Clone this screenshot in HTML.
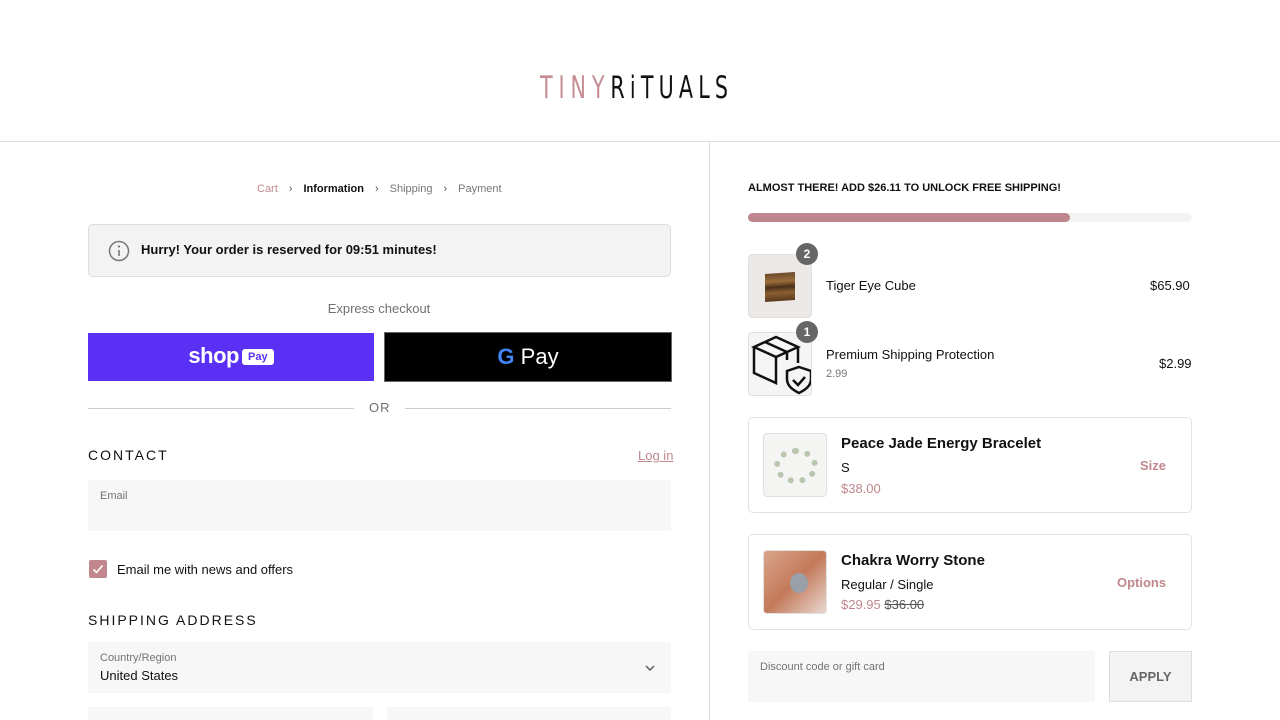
<!DOCTYPE html>
<html><head><meta charset="utf-8"><style>
*{box-sizing:border-box;margin:0;padding:0}
html,body{width:1280px;height:720px;overflow:hidden}
body{background:#fff;font-family:"Liberation Sans",sans-serif;color:#111;position:relative}
.a{position:absolute}
.field{background:#f7f7f7;position:absolute}
.lbl{position:absolute;font-size:11px;color:#737373}
.card{position:absolute;border:1px solid #e3e3e3;border-radius:5px;left:748px;width:444px}
.thumb{position:absolute;border:1px solid #e0e0e0;border-radius:4px;overflow:hidden}
.pink{color:#c0878e}
.badge{position:absolute;width:22px;height:22px;border-radius:11px;background:#666;color:#fff;font-size:12px;font-weight:bold;text-align:center;line-height:22px}
</style></head><body>
<div class="a" style="left:540px;top:70px;font-size:31px;letter-spacing:8px;transform:scaleX(0.74);transform-origin:left;white-space:nowrap;font-family:'DejaVu Sans Condensed','Liberation Sans',sans-serif;font-weight:200"><span style="color:#c58d93">TINY</span><span style="color:#111;letter-spacing:7px">RiTUALS</span></div>
<div class="a" style="left:0;top:141px;width:1280px;height:1px;background:#dedede"></div>
<div class="a" style="left:709px;top:141px;width:1px;height:579px;background:#dedede"></div>

<div class="a" style="left:257px;top:183px;font-size:11px;color:#777;white-space:nowrap"><span class="pink">Cart</span><span style="margin:0 11px;color:#555">›</span><b style="color:#111">Information</b><span style="margin:0 11px;color:#555">›</span>Shipping<span style="margin:0 11px;color:#555">›</span>Payment</div>

<div class="a" style="left:88px;top:224px;width:583px;height:53px;background:#f3f3f3;border:1px solid #ddd;border-radius:5px">
<svg class="a" style="left:19px;top:15px" width="22" height="22" viewBox="0 0 22 22"><circle cx="11" cy="11" r="9.5" fill="none" stroke="#777" stroke-width="1.5"/><line x1="11" y1="10" x2="11" y2="16" stroke="#777" stroke-width="1.6"/><circle cx="11" cy="6.5" r="1.1" fill="#777"/></svg>
<div class="a" style="left:52px;top:17px;font-size:13px;font-weight:bold">Hurry! Your order is reserved for 09:51 minutes!</div></div>

<div class="a" style="left:0;width:758px;top:301px;text-align:center;font-size:13px;color:#707070">Express checkout</div>
<div class="a" style="left:88px;top:333px;width:286px;height:48px;background:#5a31f4;color:#fff;text-align:center">
<span style="font-size:22px;font-weight:bold;line-height:46px;letter-spacing:-0.5px">shop</span><span style="display:inline-block;background:#fff;color:#5a31f4;font-size:11px;font-weight:bold;padding:2px 6px;border-radius:3px;margin-left:3px;vertical-align:3px">Pay</span></div>
<div class="a" style="left:384px;top:332px;width:288px;height:50px;background:#000;border:1px solid #666;color:#fff;text-align:center;font-size:22px;line-height:48px"><span style="font-weight:bold;color:#4285f4">G</span> Pay</div>

<div class="a" style="left:88px;top:408px;width:266px;height:1px;background:#ccc"></div>
<div class="a" style="left:405px;top:408px;width:266px;height:1px;background:#ccc"></div>
<div class="a" style="left:369px;top:400px;font-size:13px;color:#707070;letter-spacing:1px">OR</div>

<div class="a" style="left:88px;top:447px;font-size:14px;letter-spacing:2px">CONTACT</div>
<div class="a pink" style="left:638px;top:448px;font-size:13px;text-decoration:underline">Log in</div>
<div class="field" style="left:88px;top:480px;width:583px;height:51px"><div class="lbl" style="left:12px;top:10px">Email</div></div>
<div class="a" style="left:89px;top:560px;width:18px;height:18px;background:#c0878e;border-radius:2px"><svg width="18" height="18"><path d="M4.5 9.5l3 3 6-7" fill="none" stroke="#fff" stroke-width="1.6"/></svg></div>
<div class="a" style="left:117px;top:562px;font-size:13px">Email me with news and offers</div>
<div class="a" style="left:88px;top:612px;font-size:14px;letter-spacing:2px">SHIPPING ADDRESS</div>
<div class="field" style="left:88px;top:642px;width:583px;height:51px"><div class="lbl" style="left:12px;top:10px">Country/Region</div><div class="a" style="left:12px;top:26px;font-size:13px">United States</div>
<svg class="a" style="left:556px;top:21px" width="12" height="10"><path d="M2 3l4 4 4-4" fill="none" stroke="#555" stroke-width="1.4"/></svg></div>
<div class="field" style="left:88px;top:707px;width:285px;height:13px"></div>
<div class="field" style="left:387px;top:707px;width:284px;height:13px"></div>

<div class="a" style="left:748px;top:182px;font-size:11px;font-weight:bold">ALMOST THERE! ADD $26.11 TO UNLOCK FREE SHIPPING!</div>
<div class="a" style="left:748px;top:213px;width:444px;height:9px;background:#f3f3f3;border-radius:5px"><div style="width:322px;height:9px;background:#bf868d;border-radius:5px"></div></div>

<div class="thumb" style="left:748px;top:254px;width:64px;height:64px;background:#ece8e6"><div class="a" style="left:16px;top:18px;width:30px;height:28px;background:linear-gradient(#6b4a2a,#9b6d3c 30%,#4a3018 50%,#8a5e32 70%,#5a3a1e);transform:skewY(-4deg)"></div></div>
<div class="badge" style="left:796px;top:243px">2</div>
<div class="a" style="left:826px;top:278px;font-size:13px">Tiger Eye Cube</div>
<div class="a" style="left:1150px;top:278px;font-size:13px">$65.90</div>

<div class="thumb" style="left:748px;top:332px;width:64px;height:64px;background:#f5f5f5">
<svg width="64" height="64" viewBox="0 0 64 64" fill="none" stroke="#111" stroke-width="2.5"><path d="M5 14l22-10 22 10-22 10z"/><path d="M5 14v26l22 10V24M49 14v16"/><path d="M16 9l22 10v8"/><path d="M50 34l12 4v8c0 7-6 11-12 14-6-3-12-7-12-14v-8z"/><path d="M44 47l5 5 7-8"/></svg></div>
<div class="badge" style="left:796px;top:321px">1</div>
<div class="a" style="left:826px;top:347px;font-size:13px">Premium Shipping Protection</div>
<div class="a" style="left:826px;top:368px;font-size:11px;color:#777">2.99</div>
<div class="a" style="left:1159px;top:356px;font-size:13px">$2.99</div>

<div class="card" style="top:417px;height:96px">
<div class="thumb" style="left:14px;top:15px;width:64px;height:64px;background:#f4f4f2"><div class="a" style="left:10px;top:14px;width:44px;height:36px;border:6px dotted #b8c6b0;border-radius:50%"></div></div>
<div class="a" style="left:92px;top:17px;font-size:15px;font-weight:bold">Peace Jade Energy Bracelet</div>
<div class="a" style="left:92px;top:42px;font-size:13px">S</div>
<div class="a pink" style="left:92px;top:63px;font-size:13px">$38.00</div>
<div class="a pink" style="left:391px;top:40px;font-size:13px;font-weight:bold">Size</div></div>

<div class="card" style="top:534px;height:96px">
<div class="thumb" style="left:14px;top:15px;width:64px;height:64px;background:linear-gradient(135deg,#d9a58a,#c47a5a 50%,#e8d8d0)"><div class="a" style="left:26px;top:22px;width:18px;height:20px;border-radius:50%;background:#9aa0a8"></div></div>
<div class="a" style="left:92px;top:17px;font-size:15px;font-weight:bold">Chakra Worry Stone</div>
<div class="a" style="left:92px;top:42px;font-size:13px">Regular / Single</div>
<div class="a" style="left:92px;top:62px;font-size:13px"><span class="pink">$29.95</span> <span style="color:#555;text-decoration:line-through">$36.00</span></div>
<div class="a pink" style="left:368px;top:40px;font-size:13px;font-weight:bold">Options</div></div>

<div class="field" style="left:748px;top:651px;width:347px;height:51px"><div class="lbl" style="left:12px;top:10px">Discount code or gift card</div></div>
<div class="a" style="left:1109px;top:651px;width:83px;height:51px;background:#f3f3f3;border:1px solid #ddd;text-align:center;line-height:49px;font-size:13px;font-weight:bold;color:#666">APPLY</div>
</body></html>
